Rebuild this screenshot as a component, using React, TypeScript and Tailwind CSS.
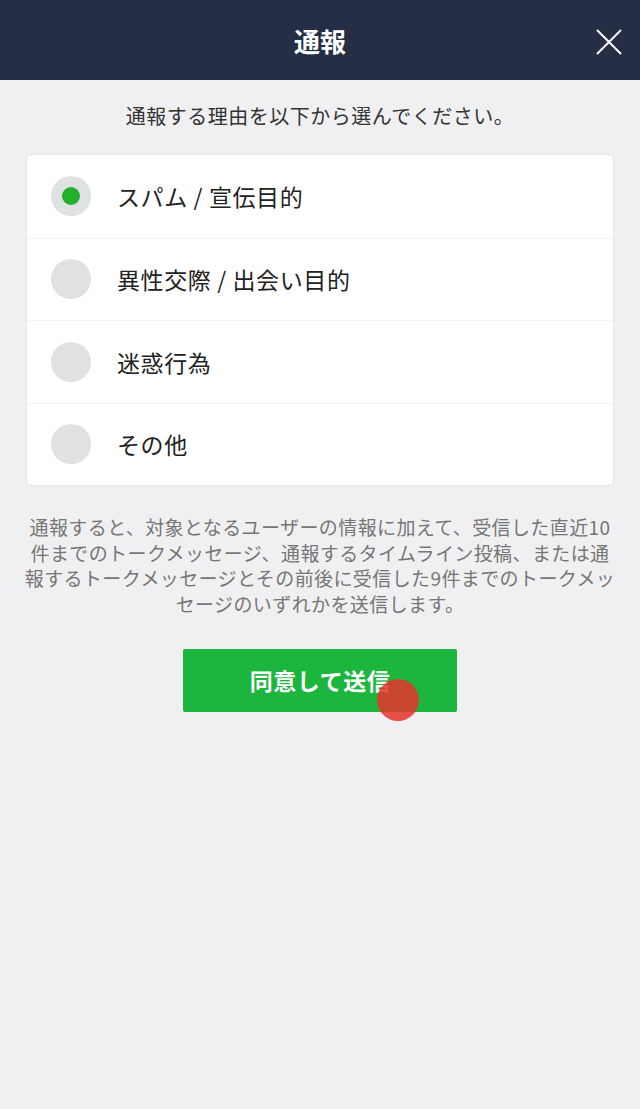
import { useState } from "react";

const reasons = ["スパム / 宣伝目的", "異性交際 / 出会い目的", "迷惑行為", "その他"];

export default function App() {
  const [selected, setSelected] = useState(0);

  return (
    <div
      className="min-h-[1109px] w-[640px] bg-[#f0f0f2] flex flex-col"
      style={{ fontFamily: '"Noto Sans CJK JP", "Noto Sans", sans-serif' }}
    >
      <header className="relative h-[80px] bg-[#262e45] flex items-center justify-center">
        <h1 className="text-white text-[26px] font-bold">通報</h1>
        <button className="absolute right-[16px] top-[27px] w-[30px] h-[30px] text-white">
          <svg viewBox="0 0 30 30" className="w-full h-full" fill="none" stroke="currentColor" strokeWidth="2">
            <path d="M3 3 L27 27 M27 3 L3 27" />
          </svg>
        </button>
      </header>

      <p className="mt-[22px] text-center text-[20px] tracking-[0.5px] text-[#333] leading-[28px]">
        通報する理由を以下から選んでください。
      </p>

      <div className="mx-[26px] mt-[24px] bg-white border border-[#e4e4e6] rounded-[3px]">
        {reasons.map((r, i) => (
          <div
            key={r}
            onClick={() => setSelected(i)}
            className={`h-[82.5px] flex items-center pl-[24px] cursor-pointer ${i > 0 ? "border-t border-[#f3f3f4]" : ""}`}
          >
            <div className="w-[40px] h-[40px] rounded-full bg-[#e0e1e3] flex items-center justify-center">
              {selected === i && <div className="w-[18px] h-[18px] rounded-full bg-[#22b02f]" />}
            </div>
            <span className="ml-[26px] text-[23px] tracking-[0.6px] text-[#222]">{r}</span>
          </div>
        ))}
      </div>

      <p className="mt-[28px] px-[10px] text-center text-[19px] tracking-[0.4px] leading-[25.5px] text-[#767676] whitespace-nowrap">
        通報すると、対象となるユーザーの情報に加えて、受信した直近10
        <br />
        件までのトークメッセージ、通報するタイムライン投稿、または通
        <br />
        報するトークメッセージとその前後に受信した9件までのトークメッ
        <br />
        セージのいずれかを送信します。
      </p>

      <div className="mt-[33px] flex justify-center">
        <button className="relative w-[274px] h-[63px] bg-[#1cb63e] rounded-[2px] text-white text-[23px] font-bold tracking-[0.5px]">
          同意して送信
          <span className="absolute left-[194px] top-[30px] w-[42px] h-[42px] rounded-full bg-[#e8322c]/85" />
        </button>
      </div>
    </div>
  );
}
